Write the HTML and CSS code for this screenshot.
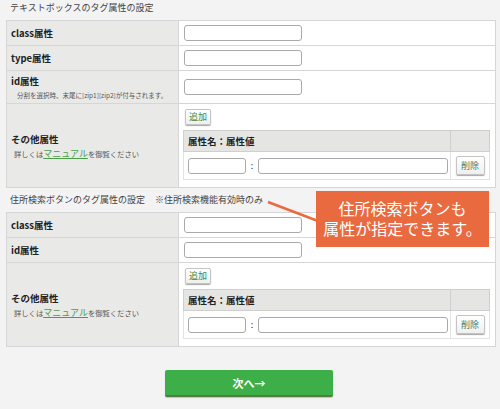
FILE: index.html
```html
<!DOCTYPE html>
<html lang="ja">
<head>
    <meta charset="UTF-8">
    <meta name="viewport" content="width=device-width, initial-scale=1.0">
    <title>タグ属性の設定</title>
    <link rel="stylesheet" href="styles.css">
</head>
<body>
    <div class="page">
        <h2 class="sec-title">テキストボックスのタグ属性の設定</h2>
        <table class="form">
            <tr class="row-s">
                <th>class属性</th>
                <td><input type="text" class="txt"></td>
            </tr>
            <tr class="row-s">
                <th>type属性</th>
                <td><input type="text" class="txt"></td>
            </tr>
            <tr class="row-m">
                <th>id属性<span class="note">分割を選択時、末尾に[zip1][zip2]が付与されます。</span></th>
                <td><input type="text" class="txt"></td>
            </tr>
            <tr>
                <th>その他属性<span class="note note-link">詳しくは<a href="#">マニュアル</a>を御覧ください</span></th>
                <td class="attr-cell">
                    <button type="button" class="btn-sub btn-add">追加</button>
                    <table class="attr">
                        <tr>
                            <th>属性名：属性値</th>
                            <th class="col-del"></th>
                        </tr>
                        <tr>
                            <td><input type="text" class="txt-name"><span class="colon">:</span><input type="text" class="txt-val"></td>
                            <td class="col-del"><button type="button" class="btn-sub btn-del">削除</button></td>
                        </tr>
                    </table>
                </td>
            </tr>
        </table>

        <h2 class="sec-title">住所検索ボタンのタグ属性の設定<span class="sec-note">※住所検索機能有効時のみ</span></h2>
        <table class="form">
            <tr class="row-s">
                <th>class属性</th>
                <td><input type="text" class="txt"></td>
            </tr>
            <tr class="row-s">
                <th>id属性</th>
                <td><input type="text" class="txt"></td>
            </tr>
            <tr>
                <th>その他属性<span class="note note-link">詳しくは<a href="#">マニュアル</a>を御覧ください</span></th>
                <td class="attr-cell">
                    <button type="button" class="btn-sub btn-add">追加</button>
                    <table class="attr">
                        <tr>
                            <th>属性名：属性値</th>
                            <th class="col-del"></th>
                        </tr>
                        <tr>
                            <td><input type="text" class="txt-name"><span class="colon">:</span><input type="text" class="txt-val"></td>
                            <td class="col-del"><button type="button" class="btn-sub btn-del">削除</button></td>
                        </tr>
                    </table>
                </td>
            </tr>
        </table>

        <button type="button" class="btn-next">次へ→</button>

        <!-- callout over the second section -->
        <svg class="callout-line" width="60" height="30" viewBox="0 0 60 30">
            <line x1="2" y1="3" x2="52" y2="22" stroke="#ea6a40" stroke-width="2.5"/>
        </svg>
        <div class="callout">住所検索ボタンも<br>属性が指定できます。</div>
    </div>
</body>
</html>
```

FILE: styles.css
```css
body {
    margin: 0;
    padding: 0;
    background-color: #f3f3f3;
    font-family: "Noto Sans CJK JP", "Liberation Sans", sans-serif;
    font-size: 9px;
    line-height: 14px;
    color: #333;
}
.page {
    position: relative;
    width: 500px;
    height: 409px;
    padding: 2px 4px 0 6px;
    box-sizing: border-box;
}
.sec-title {
    margin: 0 0 6px 0;
    padding-left: 4px;
    font-size: 9px;
    line-height: 12px;
    font-weight: normal;
    color: #444;
}
.form + .sec-title {
    margin-top: 6px;
}
.sec-note {
    margin-left: 10px;
}
.form {
    width: 490px;
    border-collapse: collapse;
    border: 1px solid #d6d6d6;
    table-layout: fixed;
}
.form > tbody > tr > th {
    width: 163px;
    padding: 0 4px;
    background-color: #e9e9e7;
    border: 1px solid #d6d6d6;
    text-align: left;
    vertical-align: middle;
    font-size: 9.5px;
    line-height: 14px;
    font-weight: bold;
    color: #222;
}
.form > tbody > tr > td {
    padding: 0 5px 0 5px;
    background-color: #fff;
    border: 1px solid #d6d6d6;
    vertical-align: middle;
    line-height: 16px;
}
.row-s {
    height: 25px;
}
.row-m {
    height: 33px;
}
.note {
    display: block;
    padding-left: 6px;
    margin-top: 2px;
    font-size: 6.5px;
    line-height: 10px;
    font-weight: normal;
    color: #555;
}
.note-link {
    padding-left: 3px;
    margin-top: 3px;
    font-size: 7.3px;
}
.note a {
    color: #4a9e4a;
    font-size: 9px;
}
input[type="text"] {
    display: inline-block;
    height: 16px;
    margin: 0;
    padding: 0 3px;
    box-sizing: border-box;
    border: 1px solid #aaa;
    border-radius: 3px;
    background-color: #fff;
    vertical-align: middle;
}
.txt {
    width: 118px;
}
.txt-name {
    width: 58px;
}
.txt-val {
    width: 190px;
}
.colon {
    display: inline-block;
    width: 12px;
    text-align: center;
    font-size: 9px;
    line-height: 16px;
    vertical-align: middle;
    color: #333;
}
.form > tbody > tr > td.attr-cell {
    padding: 5px 5px 7px 4px;
    vertical-align: top;
}
.btn-sub {
    display: block;
    padding: 0;
    border: 1px solid #c4c4c4;
    border-radius: 2px;
    background: linear-gradient(#ffffff, #efefef);
    box-shadow: 0 1px 1px rgba(0,0,0,0.35);
    color: #3b8a3b;
    font-family: inherit;
    font-size: 9px;
    line-height: 14px;
    cursor: pointer;
}
.btn-add {
    width: 26px;
    height: 16px;
    margin: 0 0 5px 2px;
}
.btn-del {
    width: 29px;
    height: 19px;
    margin: 0 auto;
    color: #4a7a5a;
}
.attr {
    width: 100%;
    border-collapse: collapse;
    border: 1px solid #cfcfcf;
}
.attr th {
    height: 20px;
    padding: 0 4px;
    background-color: #e5e6e4;
    border: 1px solid #cfcfcf;
    text-align: left;
    font-size: 9.5px;
    line-height: 14px;
    font-weight: bold;
    color: #222;
}
.attr td {
    height: 27px;
    padding: 0 0 0 4px;
    border: 1px solid #e2e2e2;
    white-space: nowrap;
    vertical-align: middle;
    font-size: 9px;
    line-height: 16px;
}
.attr .col-del {
    width: 38px;
    padding: 0;
    text-align: center;
}
.btn-next {
    display: block;
    width: 168px;
    height: 27px;
    margin: 23px auto 0 auto;
    padding: 0;
    border: none;
    border-bottom: 2px solid #557a40;
    border-radius: 2px;
    background-color: #3caf48;
    box-shadow: 0 1px 1px rgba(0,0,0,0.2);
    color: #fff;
    font-family: inherit;
    font-size: 11px;
    font-weight: bold;
    cursor: pointer;
    position: relative;
    left: -2px;
}
.callout {
    position: absolute;
    left: 316px;
    top: 191px;
    width: 173px;
    height: 56px;
    padding-top: 7px;
    box-sizing: border-box;
    background-color: #ea6a40;
    color: #fff;
    text-align: center;
    font-size: 16px;
    line-height: 20px;
}
.callout-line {
    position: absolute;
    left: 266px;
    top: 199px;
}
```
